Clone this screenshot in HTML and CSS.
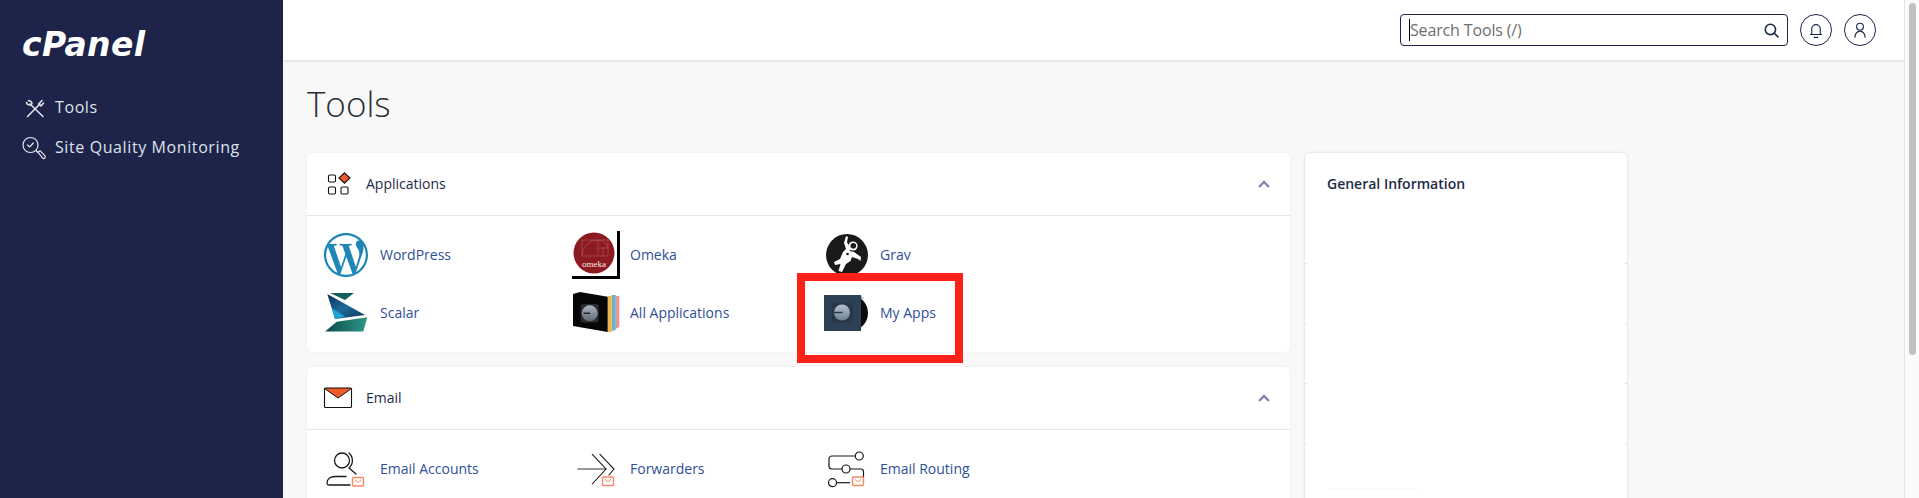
FILE: index.html
```html
<!DOCTYPE html>
<html lang="en">
<head>
    <meta charset="UTF-8">
    <meta name="viewport" content="width=device-width, initial-scale=1.0">
    <title>Tools - cPanel</title>
    <link rel="stylesheet" href="styles.css">
</head>
<body>
    <div class="app">
        <aside class="sidebar">
            <div class="logo">cPanel</div>
            <nav class="nav">
                <a class="nav-item">
                    <svg class="nav-icon" viewBox="0 0 26 26" fill="none" stroke="#e6e8ef" stroke-width="1.5" stroke-linecap="round">
                        <path d="M8 10 L21 22.5"/>
                        <path d="M4.5 8.5 a3 3 0 0 0 4.5 2 M6.5 6.8 a3 3 0 0 1 3.5 3"/>
                        <path d="M18 10 L5.5 22.5"/>
                        <path d="M16.5 10 l3.5 -3.5 M19 12 l2.5 -3 M16.5 10 L19 12"/>
                    </svg>
                    <span>Tools</span>
                </a>
                <a class="nav-item">
                    <svg class="nav-icon" viewBox="0 0 26 26" fill="none" stroke="#e6e8ef" stroke-width="1.2" stroke-linecap="round">
                        <circle cx="8.5" cy="11" r="7.5"/>
                        <path d="M5.5 11 l2.2 2 l3.6 -4"/>
                        <path d="M14 16.5 l2 2"/>
                        <path d="M16 18.2 l2 -1.5 l5 5.2 a1.6 1.6 0 0 1 -2.4 2.1 z"/>
                    </svg>
                    <span>Site Quality Monitoring</span>
                </a>
            </nav>
        </aside>

        <div class="content">
            <header class="topbar">
                <div class="search">
                    <span class="search-text">Search Tools (/)</span>
                    <svg class="search-icon" viewBox="0 0 14 14" fill="none" stroke="#1d2b45" stroke-width="1.5" stroke-linecap="round">
                        <circle cx="6" cy="6" r="4.8"/>
                        <path d="M9.6 9.6 L13 13"/>
                    </svg>
                </div>
                <button class="round-btn">
                    <svg viewBox="0 0 16 16" fill="none" stroke="#1d2449" stroke-width="1" stroke-linecap="round">
                        <path d="M3 12 h10 M4.2 12 V7 a3.8 3.8 0 0 1 7.6 0 V12"/>
                        <path d="M6.5 14.6 h3"/>
                    </svg>
                </button>
                <button class="round-btn">
                    <svg viewBox="0 0 16 16" fill="none" stroke="#1d2449" stroke-width="1" stroke-linecap="round">
                        <circle cx="8" cy="5" r="3"/>
                        <path d="M3.5 14.5 a4.5 5.5 0 0 1 9 0"/>
                    </svg>
                </button>
            </header>

            <main class="main">
                <h1 class="page-title">Tools</h1>
                <div class="columns">
                    <div class="groups">
                        <section class="card">
                            <div class="card-head">
                                <svg class="head-icon" viewBox="0 0 30 30" fill="none" stroke="#111" stroke-width="1.1">
                                    <rect x="5.5" y="6" width="7" height="7" rx="1.2"/>
                                    <rect x="5.5" y="18" width="7" height="7" rx="1.2"/>
                                    <rect x="18" y="18" width="7" height="7" rx="1.2"/>
                                    <path d="M21.5 3.8 L27 9 L21.5 14.2 L16 9 Z" fill="#f0592a"/>
                                </svg>
                                <span class="head-title">Applications</span>
                                <svg class="chevron" viewBox="0 0 12 8" fill="none" stroke="#8089ac" stroke-width="2.4"><path d="M1 7 L6 2 L11 7"/></svg>
                            </div>
                            <div class="items">
                                <a class="item">
                                    <span class="item-icon">
                                        <svg class="wp" viewBox="0 0 24 24"><path fill="#1f87b5" d="M21.469 6.825c.84 1.537 1.318 3.3 1.318 5.175 0 3.979-2.156 7.456-5.363 9.325l3.295-9.527c.615-1.54.82-2.771.82-3.864 0-.405-.026-.78-.07-1.11m-7.981.105c.647-.03 1.232-.105 1.232-.105.582-.075.514-.93-.067-.899 0 0-1.755.135-2.88.135-1.064 0-2.85-.15-2.85-.15-.585-.03-.661.855-.075.885 0 0 .54.061 1.125.09l1.68 4.605-2.37 7.08L5.354 6.9c.649-.03 1.234-.1 1.234-.1.585-.075.516-.93-.065-.896 0 0-1.746.138-2.874.138-.2 0-.438-.008-.69-.015C4.911 3.15 8.235 1.215 12 1.215c2.809 0 5.365 1.072 7.286 2.833-.046-.003-.091-.009-.141-.009-1.06 0-1.812.923-1.812 1.914 0 .89.513 1.643 1.06 2.531.411.72.89 1.643.89 2.977 0 .915-.354 2-.821 3.479l-1.075 3.585-3.9-11.61.001.014zM12 22.784c-1.059 0-2.081-.153-3.048-.437l3.237-9.406 3.315 9.087c.024.053.05.101.078.149-1.12.393-2.325.609-3.582.609M1.211 12c0-1.564.336-3.05.935-4.39L7.29 21.709C3.694 19.96 1.212 16.271 1.211 12M12 0C5.385 0 0 5.385 0 12s5.385 12 12 12 12-5.385 12-12S18.615 0 12 0"/></svg>
                                    </span>
                                    <span class="item-label">WordPress</span>
                                </a>
                                <a class="item">
                                    <span class="item-icon">
                                        <svg viewBox="0 0 48 48">
                                            <circle cx="21" cy="22" r="20.5" fill="#8d1a20"/>
                                            <g fill="none" stroke="#b56a6c" stroke-width=".5">
                                                <rect x="9" y="9" width="26" height="16"/>
                                                <path d="M25 9 V25 M25 17 H35 M30 17 V25 M9 25 A16 16 0 0 1 25 9 M25 9 A10 10 0 0 1 35 17"/>
                                            </g>
                                            <text class="omeka-word" x="21" y="35.5" text-anchor="middle">omeka</text>
                                            <path d="M45.5 0 V46.5 H-1" fill="none" stroke="#000" stroke-width="3"/>
                                        </svg>
                                    </span>
                                    <span class="item-label">Omeka</span>
                                </a>
                                <a class="item">
                                    <span class="item-icon">
                                        <svg viewBox="0 0 48 48">
                                            <circle cx="24" cy="24" r="21" fill="#1a1a1a"/>
                                            <path fill="#fff" d="M23 5 L25 6 L24 11 L26.5 16 L27 20 L31 21 L38 26 L37.5 30 L35 28 L29 26 L27.5 30 L23 33 L19 41 L15.5 40 L17.5 33 L12 34 L11 31 L17 28 L20 21 L23 18 L21 12 Z"/>
                                            <circle cx="30" cy="15" r="4.6" fill="#fff"/>
                                            <circle cx="30.3" cy="14.8" r="2.8" fill="#1a1a1a"/>
                                            <circle cx="24.5" cy="23" r="1.3" fill="#1a1a1a"/>
                                        </svg>
                                    </span>
                                    <span class="item-label">Grav</span>
                                </a>
                                <a class="item">
                                    <span class="item-icon">
                                        <svg viewBox="0 0 48 48">
                                            <defs>
                                                <linearGradient id="scalarBlue" x1="0" y1="0" x2="1" y2="1">
                                                    <stop offset="0" stop-color="#0d2f52"/>
                                                    <stop offset=".5" stop-color="#1b6a9c"/>
                                                    <stop offset="1" stop-color="#0d3553"/>
                                                </linearGradient>
                                                <linearGradient id="scalarTeal" x1="0" y1="0" x2="1" y2="0">
                                                    <stop offset="0" stop-color="#0e4a4a"/>
                                                    <stop offset="1" stop-color="#2b9a88"/>
                                                </linearGradient>
                                            </defs>
                                            <path d="M7 4 H31 L22 11 Z" fill="#12605c"/>
                                            <path d="M4.3 5 L42 26 L12 30 Z" fill="url(#scalarBlue)"/>
                                            <path d="M9 19 L22 27.5 L12 30 Z" fill="#1fa2d8"/>
                                            <path d="M44.3 28.3 L40.3 42.6 H2 L13.7 32.7 Z" fill="url(#scalarTeal)"/>
                                        </svg>
                                    </span>
                                    <span class="item-label">Scalar</span>
                                </a>
                                <a class="item">
                                    <span class="item-icon">
                                        <svg viewBox="0 0 48 48">
                                            <defs>
                                                <linearGradient id="knobA" x1="0" y1="0" x2="0" y2="1">
                                                    <stop offset="0" stop-color="#aab4c4"/>
                                                    <stop offset="1" stop-color="#5f6873"/>
                                                </linearGradient>
                                            </defs>
                                            <path d="M42.5 7 H46.3 V38 L42.5 40 Z" fill="#e8949a"/>
                                            <path d="M38.7 6 H42.7 V41 L38.7 42 Z" fill="#6bb3c6"/>
                                            <path d="M34.7 7 H38.7 V43 H34.7 Z" fill="#f2b34a"/>
                                            <path d="M0 5 L7 3 L34.7 7.7 V43 L0 37 Z" fill="#060606"/>
                                            <rect x="7.7" y="15" width="18" height="18.5" rx="2" fill="#2b2b2e"/>
                                            <circle cx="16.7" cy="24.3" r="8" fill="url(#knobA)"/>
                                            <path d="M10.5 24.3 H17" stroke="#222" stroke-width="1.4"/>
                                        </svg>
                                    </span>
                                    <span class="item-label">All Applications</span>
                                </a>
                                <a class="item">
                                    <span class="item-icon">
                                        <svg viewBox="0 0 48 48">
                                            <defs>
                                                <linearGradient id="knobB" x1="0" y1="0" x2="0" y2="1">
                                                    <stop offset="0" stop-color="#b4c2d2"/>
                                                    <stop offset="1" stop-color="#6d8095"/>
                                                </linearGradient>
                                            </defs>
                                            <circle cx="27" cy="24" r="18" fill="#0b0b0b"/>
                                            <path d="M38 6 L41 10 H38 Z" fill="#b5b5b5"/>
                                            <rect x="1" y="6" width="37" height="36" fill="#2c4254"/>
                                            <rect x="9" y="14" width="21" height="20" rx="2" fill="#283846"/>
                                            <circle cx="19" cy="23.5" r="8" fill="url(#knobB)"/>
                                            <path d="M11 23.5 H19.5" stroke="#28333e" stroke-width="1.4"/>
                                        </svg>
                                    </span>
                                    <span class="item-label">My Apps</span>
                                    <span class="marker"></span>
                                </a>
                            </div>
                        </section>

                        <section class="card">
                            <div class="card-head">
                                <svg class="head-icon" viewBox="0 0 30 30" fill="none">
                                    <path d="M1 5 H29 L15 15 Z" fill="#f0592a"/>
                                    <rect x="1.5" y="5" width="27" height="19.5" rx="1" stroke="#111" stroke-width="1.1"/>
                                    <path d="M1.5 5.5 L15 15 L28.5 5.5" stroke="#111" stroke-width="1"/>
                                </svg>
                                <span class="head-title">Email</span>
                                <svg class="chevron" viewBox="0 0 12 8" fill="none" stroke="#8089ac" stroke-width="2.4"><path d="M1 7 L6 2 L11 7"/></svg>
                            </div>
                            <div class="items">
                                <a class="item">
                                    <span class="item-icon">
                                        <svg viewBox="0 0 48 48" fill="none" stroke="#1a1a1a" stroke-width="1.3" stroke-linecap="round">
                                            <circle cx="19" cy="15.5" r="7.5"/>
                                            <path d="M26 8 a10 10 0 0 1 0 15 L33 29"/>
                                            <path d="M4 38.5 c0 -5 4 -7 8 -7 h11 M4 38.5 c0 1 1 1.5 2 1.5 H27"/>
                                            <rect x="29.5" y="32.5" width="11" height="8.5" rx="1" fill="#fff" stroke="#f58a66" stroke-width="1.4"/>
                                            <path d="M32 35 L35 37.3 L38 35" stroke="#f58a66" stroke-width="1"/>
                                        </svg>
                                    </span>
                                    <span class="item-label">Email Accounts</span>
                                </a>
                                <a class="item">
                                    <span class="item-icon">
                                        <svg viewBox="0 0 48 48" fill="none" stroke="#1a1a1a" stroke-width="1.1" stroke-linecap="round">
                                            <path d="M5 24 H33" stroke="#777" stroke-width="1.6"/>
                                            <path d="M19.3 9.3 L33 24 L19.3 39"/>
                                            <path d="M27 9.3 L41 24 L36 30"/>
                                            <rect x="29.5" y="32" width="11" height="8.5" rx="1" fill="#fff" stroke="#f58a66" stroke-width="1.4"/>
                                            <path d="M32 34.5 L35 36.8 L38 34.5" stroke="#f58a66" stroke-width="1"/>
                                        </svg>
                                    </span>
                                    <span class="item-label">Forwarders</span>
                                </a>
                                <a class="item">
                                    <span class="item-icon">
                                        <svg viewBox="0 0 48 48" fill="none" stroke="#1a1a1a" stroke-width="1.2">
                                            <circle cx="36.3" cy="11" r="4"/>
                                            <path d="M32.3 11 H9 a3 3 0 0 0 -3 3 V21 a3 3 0 0 0 3 3 H19"/>
                                            <circle cx="23" cy="24" r="4"/>
                                            <path d="M27 24 H38 a2.5 2.5 0 0 1 2.5 2.5 V32"/>
                                            <circle cx="9.5" cy="37.7" r="4"/>
                                            <path d="M13.5 37.7 H27"/>
                                            <rect x="29.5" y="32" width="11" height="8.5" rx="1" fill="#fff" stroke="#f58a66" stroke-width="1.4"/>
                                            <path d="M32 34.5 L35 36.8 L38 34.5" stroke="#f58a66" stroke-width="1"/>
                                        </svg>
                                    </span>
                                    <span class="item-label">Email Routing</span>
                                </a>
                            </div>
                        </section>
                    </div>

                    <aside class="info-card">
                        <h2 class="info-title">General Information</h2>
                        <div class="info-row"></div>
                        <div class="info-row"></div>
                        <div class="info-row"></div>
                        <div class="info-row info-last"><div class="info-fade"></div></div>
                    </aside>
                </div>
            </main>
        </div>

        <div class="scrollbar"><div class="scroll-thumb"></div></div>
    </div>
</body>
</html>
```

FILE: styles.css
```css
* {
    box-sizing: border-box;
}

html, body {
    height: 100%;
    margin: 0;
    overflow: hidden;
}

body {
    font-family: "Open Sans", Arial, sans-serif;
    background-color: #f8f8f8;
    color: #1d2b45;
}

.app {
    display: flex;
    height: 100vh;
}

/* sidebar */
.sidebar {
    width: 283px;
    flex-shrink: 0;
    background-color: #1e2449;
    padding: 25px 0 0 22px;
}

.logo {
    font-family: "DejaVu Sans", sans-serif;
    font-size: 33px;
    font-weight: 700;
    font-style: italic;
    letter-spacing: 0.4px;
    line-height: 40px;
    color: #fff;
}

.nav {
    margin-top: 22px;
}

.nav-item {
    display: flex;
    align-items: center;
    gap: 7px;
    height: 40px;
    font-size: 16px;
    letter-spacing: 0.6px;
    color: #dfe2ec;
}

.nav-icon {
    width: 26px;
    height: 26px;
    flex-shrink: 0;
}

/* top bar */
.content {
    flex: 1;
    min-width: 0;
    display: flex;
    flex-direction: column;
}

.topbar {
    height: 60px;
    flex-shrink: 0;
    display: flex;
    align-items: center;
    justify-content: flex-end;
    gap: 12px;
    padding: 0 28px 0 0;
    background-color: #fff;
    box-shadow: 0 1px 3px rgba(0, 0, 0, 0.12);
}

.search {
    width: 388px;
    height: 32px;
    display: flex;
    align-items: center;
    justify-content: space-between;
    padding: 0 8px;
    background-color: #fff;
    border: 1px solid #1e2449;
    border-radius: 4px;
}

.search-text {
    font-size: 16px;
    letter-spacing: -0.15px;
    line-height: 22px;
    color: #6f6f6f;
    border-left: 1px solid #000;
    margin-right: auto;
}

.search-icon {
    width: 15px;
    height: 15px;
}

.round-btn {
    width: 32px;
    height: 32px;
    padding: 0;
    display: flex;
    align-items: center;
    justify-content: center;
    background-color: #fff;
    border: 1px solid #1e2449;
    border-radius: 50%;
}

.round-btn svg {
    width: 18px;
    height: 18px;
}

/* main area */
.main {
    flex: 1;
    min-height: 0;
    padding: 0 0 0 24px;
}

.page-title {
    margin: 0;
    height: 93px;
    padding-top: 19px;
    font-size: 35px;
    font-weight: 300;
    line-height: 50px;
    color: #2b2f36;
}

.columns {
    display: grid;
    grid-template-columns: 983px 322px;
    gap: 15px;
}

.groups {
    display: flex;
    flex-direction: column;
    gap: 15px;
}

.card {
    background-color: #fff;
    border-radius: 5px;
    box-shadow: 0 0 3px rgba(0, 0, 0, 0.05);
}

.card-head {
    height: 63px;
    display: flex;
    align-items: center;
    gap: 13px;
    padding: 0 20px 0 16px;
    border-bottom: 1px solid #e3e5ee;
}

.head-icon {
    width: 30px;
    height: 30px;
    flex-shrink: 0;
}

.head-title {
    font-size: 14px;
    flex: 1;
    margin-bottom: 2px;
}

.chevron {
    width: 12px;
    height: 8px;
}

.items {
    display: grid;
    grid-template-columns: repeat(3, 250px);
    row-gap: 10px;
    padding: 15px 16px;
}

.item {
    position: relative;
    display: flex;
    align-items: center;
    gap: 9px;
    height: 48px;
    font-size: 14px;
    color: #2f4f98;
}

.item-label {
    margin-bottom: 2px;
}

.item-icon {
    width: 48px;
    height: 48px;
    flex-shrink: 0;
}

.item-icon svg {
    display: block;
    width: 48px;
    height: 48px;
    overflow: visible;
}

.item-icon .wp {
    width: 44px;
    height: 44px;
    margin: 2px 0 0 1px;
}

.omeka-word {
    font-family: "Liberation Serif", serif;
    font-size: 9px;
    fill: #f3e7e7;
}

/* red box drawn over the screenshot */
.marker {
    position: absolute;
    left: -26px;
    top: -16px;
    width: 166px;
    height: 90px;
    border: 8px solid #ff2019;
}

/* general information */
.info-card {
    background-color: #fff;
    border-radius: 5px;
    box-shadow: 0 0 3px rgba(0, 0, 0, 0.16);
}

.info-title {
    margin: 0;
    height: 110px;
    padding: 21px 0 0 22px;
    font-size: 14px;
    font-weight: 600;
    line-height: 20px;
}

.info-row {
    height: 60px;
    background:
        linear-gradient(#dcdcdc, #dcdcdc) left top / 2px 1px no-repeat,
        linear-gradient(#dcdcdc, #dcdcdc) right top / 2px 1px no-repeat;
}

.info-last {
    padding: 45px 0 0 24px;
}

.info-fade {
    width: 88px;
    border-top: 1px dotted #f4f4f4;
}

/* scrollbar */
.scrollbar {
    width: 15px;
    flex-shrink: 0;
    padding: 3px 3px 0 4px;
    background-color: #fafafa;
    border-left: 1px solid #e4e4e4;
}

.scroll-thumb {
    height: 352px;
    background-color: #c1c1c1;
    border-radius: 4px;
}
```
